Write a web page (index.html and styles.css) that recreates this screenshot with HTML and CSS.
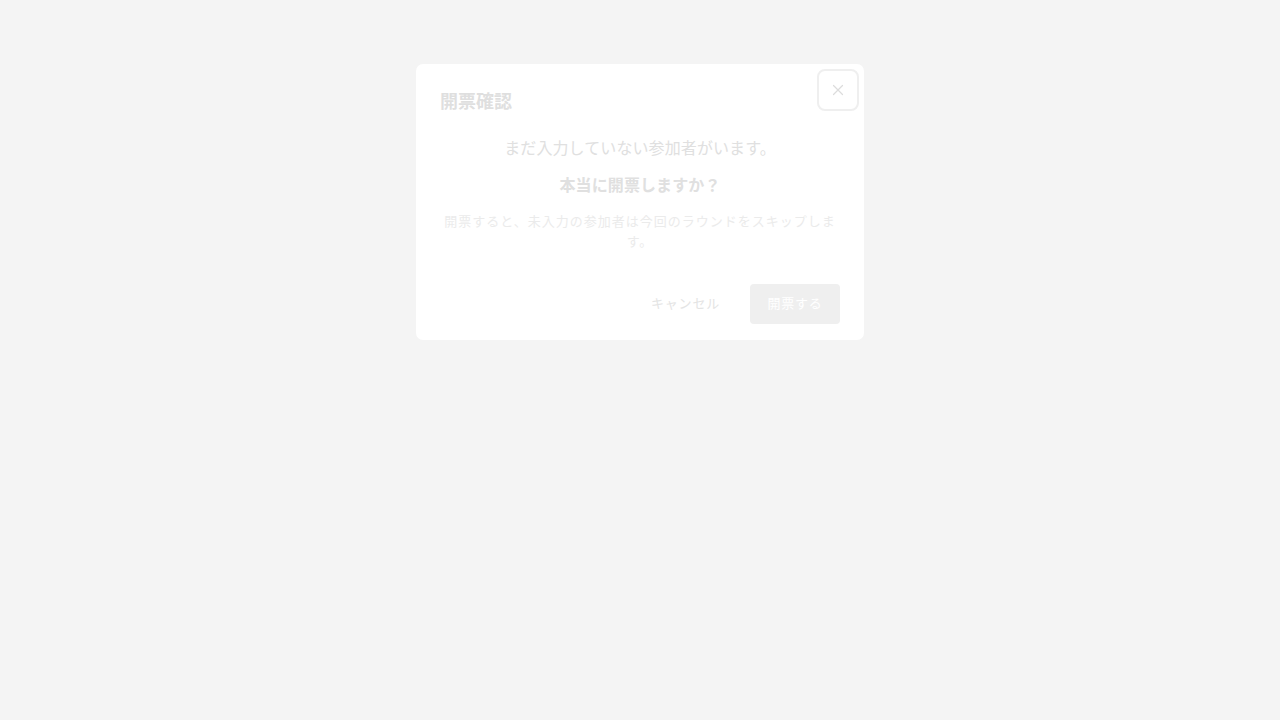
FILE: index.html
```html
<!DOCTYPE html>
<html lang="ja">
<head>
<meta charset="utf-8">
<title>開票確認</title>
<link rel="stylesheet" href="styles.css">
</head>
<body>
<div class="overlay">
  <div class="dialog" role="dialog">
    <button class="close" aria-label="閉じる">
      <svg width="12" height="12" viewBox="0 0 12 12"><path d="M1.5 1.5 L10.5 10.5 M10.5 1.5 L1.5 10.5" stroke="currentColor" stroke-width="1.2" fill="none" stroke-linecap="round"/></svg>
    </button>
    <h2 class="title">開票確認</h2>
    <div class="body">
      <p class="msg">まだ入力していない参加者がいます。</p>
      <p class="msg strong">本当に開票しますか？</p>
      <p class="note">開票すると、未入力の参加者は今回のラウンドをスキップします。</p>
    </div>
    <div class="footer">
      <button class="btn cancel">キャンセル</button>
      <button class="btn primary">開票する</button>
    </div>
  </div>
</div>
</body>
</html>
```
FILE: styles.css
```css
* { box-sizing: border-box; }
html, body { margin: 0; padding: 0; }
body {
  background: #f4f4f4;
  font-family: "Noto Sans CJK JP", "Noto Sans", sans-serif;
  width: 1280px;
  height: 720px;
}
.overlay {
  display: flex;
  justify-content: center;
  padding-top: 64px;
}
.dialog {
  position: relative;
  width: 448px;
  background: #ffffff;
  border-radius: 7px;
  padding: 23px 24px 16px;
}
.close {
  position: absolute;
  top: 5px;
  right: 5px;
  width: 42px;
  height: 42px;
  border: 2px solid #efefef;
  border-radius: 8px;
  background: #fff;
  color: #dcdcdc;
  display: flex;
  align-items: center;
  justify-content: center;
  padding: 0;
}
.close svg { display: block; }
.title {
  margin: 0;
  font-size: 18px;
  line-height: 26px;
  font-weight: 700;
  color: #dfdfdf;
}
.body {
  margin-top: 22px;
  text-align: center;
}
.msg {
  margin: 0;
  font-size: 16px;
  line-height: 24px;
  font-weight: 400;
  color: #e0e0e0;
  letter-spacing: 0.1px;
}
.msg.strong {
  margin-top: 13px;
  font-weight: 700;
}
.note {
  margin: 15px 0 0;
  font-size: 13px;
  line-height: 20px;
  color: #ebebeb;
  letter-spacing: 1px;
}
.footer {
  margin-top: 33px;
  display: flex;
  justify-content: flex-end;
  gap: 14px;
}
.btn {
  height: 40px;
  border: none;
  border-radius: 4px;
  font-family: inherit;
  font-size: 13px;
  letter-spacing: 0.8px;
  padding: 0 16px 4px;
}
.cancel {
  background: transparent;
  color: #e4e4e4;
}
.primary {
  width: 90px;
  background: #efefef;
  color: #ffffff;
}
```
